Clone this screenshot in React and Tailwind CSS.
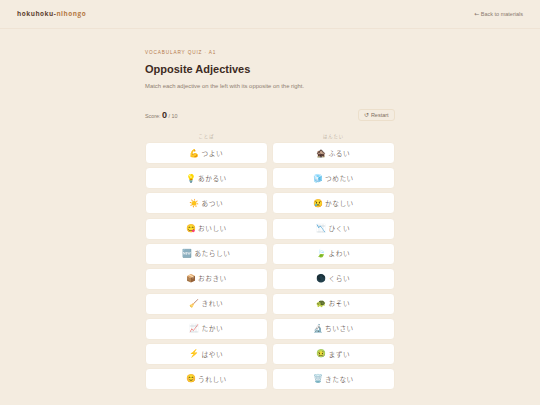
const pairs = [
    { left: ['💪', 'つよい'], right: ['🏚️', 'ふるい'] },
    { left: ['💡', 'あかるい'], right: ['🧊', 'つめたい'] },
    { left: ['☀️', 'あつい'], right: ['😢', 'かなしい'] },
    { left: ['😋', 'おいしい'], right: ['📉', 'ひくい'] },
    { left: ['🆕', 'あたらしい'], right: ['🍃', 'よわい'] },
    { left: ['📦', 'おおきい'], right: ['🌑', 'くらい'] },
    { left: ['🧹', 'きれい'], right: ['🐢', 'おそい'] },
    { left: ['📈', 'たかい'], right: ['🔬', 'ちいさい'] },
    { left: ['⚡', 'はやい'], right: ['🤢', 'まずい'] },
    { left: ['😊', 'うれしい'], right: ['🗑️', 'きたない'] },
];

const Card = ({ word: [emoji, text] }) => (
    <button
        type="button"
        className="flex h-[22px] w-full items-center justify-center gap-[2.3px] rounded-[4px] border-[0.75px] border-[#f2e9db] bg-white text-[#3d2b23]"
    >
        <span className="w-[9.5px] pt-[1px] font-['Noto_Color_Emoji',sans-serif] text-[8px] leading-none">{emoji}</span>
        <span className="font-['Noto_Sans_CJK_JP',sans-serif] text-[6.7px] font-light leading-none tracking-[0.5px]">{text}</span>
    </button>
);

const Column = ({ title, side }) => (
    <div className="min-w-0 flex-1">
        <div className="mb-[2.6px] h-[8px] text-center font-['Noto_Sans_CJK_JP',sans-serif] text-[4.3px] font-light leading-[8px] tracking-[1px] text-[#a8988a]">
            {title}
        </div>
        <div className="flex flex-col gap-[3.08px]">
            {pairs.map((pair) => (
                <Card key={pair[side][1]} word={pair[side]} />
            ))}
        </div>
    </div>
);

const App = () => {
    return (
        <div className="h-screen overflow-hidden bg-[#f4ece0] font-['Liberation_Sans',Arial,sans-serif]">
            <header className="flex h-[28.5px] items-center justify-between border-b border-[#efe3d4] px-[17px]">
                <div className="font-['Open_Sans',sans-serif] text-[6.4px] font-bold tracking-[0.52px] text-[#5f4433]">
                    hokuhoku-<span className="text-[#b57a45]">nihongo</span>
                </div>
                <a href="#materials" className="flex items-center gap-[1.5px] text-[5.5px] text-[#8a7a6e]">
                    <span className="font-['DejaVu_Sans',sans-serif] text-[6px] leading-none">←</span>
                    Back to materials
                </a>
            </header>

            <main className="mx-auto w-[250px] pt-[20px]">
                <p className="text-[4.7px] leading-[8px] tracking-[0.86px] text-[#b57a4c]">VOCABULARY QUIZ · A1</p>
                <h1 className="mt-[5px] text-[11px] font-bold leading-[15px] text-[#3d2b23]">Opposite Adjectives</h1>
                <p className="mt-[4px] text-[5.9px] leading-[10px] text-[#8f7f72]">
                    Match each adjective on the left with its opposite on the right.
                </p>

                <div className="mt-[17.5px] flex h-[13px] items-center justify-between">
                    <div className="relative top-[0.5px] text-[5.4px] leading-none text-[#8a7a6e]">
                        Score: <span className="text-[9px] font-bold text-[#3d2b23]">0</span> / 10
                    </div>
                    <button
                        type="button"
                        className="flex h-[12px] w-[37px] items-center justify-center rounded-[3px] border-[0.75px] border-[#ecdfcb] pt-[0.5px] text-[5.5px] text-[#806f62]"
                    >
                        ↺ Restart
                    </button>
                </div>

                <div className="mt-[10.7px] flex gap-[4px]">
                    <Column title="ことば" side="left" />
                    <Column title="はんたい" side="right" />
                </div>
            </main>
        </div>
    );
};

export default App;
